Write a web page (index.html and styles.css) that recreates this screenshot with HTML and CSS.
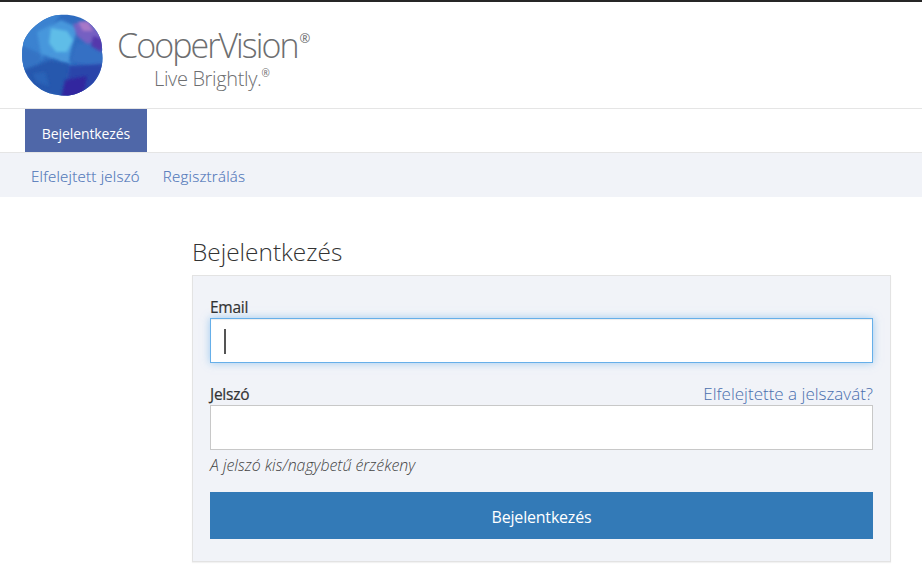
FILE: index.html
```html
<!DOCTYPE html>
<html lang="hu">
<head>
<meta charset="utf-8">
<title>Bejelentkezés</title>
<link rel="stylesheet" href="styles.css">
</head>
<body>
<header class="brand">
  <svg class="globe" width="84" height="84" viewBox="0 0 84 84" aria-hidden="true">
    <defs>
      <filter id="b" x="-30%" y="-30%" width="160%" height="160%"><feGaussianBlur stdDeviation="1.6"/></filter>
      <filter id="s" x="-5%" y="-5%" width="110%" height="110%"><feGaussianBlur stdDeviation="0.6"/></filter>
      <clipPath id="c"><path d="M38 1 C48 0 60 2 68 9 C77 16 82 27 81 38 C83 50 79 63 70 71 C60 80 48 83 37 81 C25 80 14 73 7 63 C1 53 0 42 2 31 C4 18 22 2 38 1Z"/></clipPath>
    </defs>
    <g filter="url(#s)">
      <g clip-path="url(#c)">
        <rect width="84" height="84" fill="#2f6cc0"/>
        <path d="M0 0 H40 L30 14 L24 34 L22 46 L0 44Z" fill="#3a82d0" filter="url(#b)"/>
        <path d="M-2 30 L20 40 L18 56 L-2 58Z" fill="#3673c4" filter="url(#b)"/>
        <path d="M16 18 L40 6 L58 14 L52 28 L48 46 L30 44 L20 40Z" fill="#4697dc" filter="url(#b)"/>
        <path d="M30 14 L46 17 L52 26 L46 38 L35 38 L28 29Z" fill="#5fbde8" filter="url(#b)"/>
        <path d="M30 40 L46 42 L50 50 L40 48Z" fill="#4a96da" filter="url(#b)"/>
        <path d="M56 30 L80 28 L84 50 L74 54 L50 46Z" fill="#3670c4" filter="url(#b)"/>
        <path d="M52 10 L68 6 L84 26 L66 30 L56 22Z" fill="#7460c2" filter="url(#b)"/>
        <path d="M57 8 L67 8 L72 17 L62 17Z" fill="#a878c8" filter="url(#b)"/>
        <path d="M72 22 L84 26 L80 38 L70 32Z" fill="#5438ac" filter="url(#b)"/>
        <path d="M2 56 L30 46 L48 50 L50 84 L16 78Z" fill="#2558ae" filter="url(#b)"/>
        <path d="M48 52 L84 50 L72 74 L46 84Z" fill="#2a44aa" filter="url(#b)"/>
        <path d="M44 66 L66 62 L62 84 L40 84Z" fill="#30289f" filter="url(#b)"/>
        <path d="M12 60 L24 58 L28 72 L16 68Z" fill="#2c64b8" filter="url(#b)"/>
      </g>
    </g>
  </svg>
  <div class="wordmark">
    <div class="wm-name">CooperVision<sup class="wm-r">®</sup></div>
    <div class="wm-tag">Live Brightly.<sup class="wm-r2">®</sup></div>
  </div>
</header>
<nav class="tabs">
  <a class="tab" href="#">Bejelentkezés</a>
</nav>
<nav class="subnav">
  <a href="#">Elfelejtett jelszó</a>
  <a href="#">Regisztrálás</a>
</nav>
<main class="content">
  <h1 class="title">Bejelentkezés</h1>
  <form class="panel">
    <div class="field email-field">
      <label class="label" for="email">Email</label>
      <div class="input focused" id="email"><span class="caret"></span></div>
    </div>
    <div class="field">
      <div class="label-row">
        <label class="label" for="pw">Jelszó</label>
        <a class="forgot" href="#">Elfelejtette a jelszavát?</a>
      </div>
      <input class="input" id="pw" type="password">
      <p class="hint">A jelszó kis/nagybetű érzékeny</p>
    </div>
    <button class="submit" type="button">Bejelentkezés</button>
  </form>
</main>
</body>
</html>
```
FILE: styles.css
```css
* { box-sizing: border-box; }
html, body { margin: 0; padding: 0; }
body {
  height: 587px;
  overflow: hidden;
  background: #fff;
  border-top: 2px solid #262626;
  font-family: "Open Sans", "Noto Sans", sans-serif;
  color: #333;
}
a { text-decoration: none; }
.brand {
  height: 107px;
  border-bottom: 1px solid #e5e5e5;
  display: flex;
  align-items: flex-start;
  padding: 12px 0 0 21px;
}
.globe { flex: none; }
.wordmark { margin-left: 12px; color: #6d6e70; }
.wm-name {
  font-weight: 300;
  font-size: 34px;
  line-height: 40px;
  letter-spacing: -1.95px;
  margin-top: 11px;
  white-space: nowrap;
}
.wm-r { font-size: 13px; letter-spacing: 0; vertical-align: 15px; line-height: 0; margin-left: 2px; font-weight: 400; }
.wm-tag {
  font-size: 20px;
  font-weight: 300;
  line-height: 24px;
  letter-spacing: -0.35px;
  margin: 2px 0 0 37px;
  white-space: nowrap;
}
.wm-r2 { font-size: 10px; vertical-align: 9px; line-height: 0; font-weight: 400; }
.tabs {
  height: 44px;
  padding-left: 25px;
  border-bottom: 1px solid #e5e5e5;
  display: flex;
}
.tab {
  width: 122px;
  height: 43px;
  background: #4f67a8;
  color: #fff;
  font-size: 14px;
  line-height: 50px;
  text-align: center;
  letter-spacing: -0.1px;
}
.subnav {
  height: 44px;
  background: #f1f3f8;
  padding: 1px 0 0 31px;
  display: flex;
  gap: 23px;
  align-items: center;
}
.subnav a {
  color: #4f75b8;
  font-size: 15px;
  font-weight: 300;
  letter-spacing: 0.25px;
  -webkit-text-stroke: 0.15px #4f75b8;
}
.content { padding: 0 31px 0 192px; }
.title {
  margin: 0;
  padding-top: 39px;
  height: 78px;
  font-size: 24.4px;
  font-weight: 300;
  line-height: 32px;
  color: #333;
}
.panel {
  width: 699px;
  height: 287px;
  background: #f1f3f8;
  border: 1px solid #e3e3e3;
  box-shadow: 0 1px 1px rgba(0,0,0,.05);
  padding: 21px 17px 0;
}
.field { display: block; }
.email-field { margin-bottom: 19px; }
.label {
  display: block;
  font-size: 15.5px;
  font-weight: 400;
  line-height: 21px;
  letter-spacing: -0.25px;
  color: #333;
  -webkit-text-stroke: 0.2px #333;
}
.input {
  display: block;
  width: 663px;
  height: 45px;
  background: #fff;
  border: 1px solid #c8c8c8;
  border-radius: 0;
  padding: 0;
  margin: 0;
  outline: none;
}
.focused {
  border-color: #66afe9;
  box-shadow: inset 0 1px 1px rgba(0,0,0,.075), 0 0 8px rgba(102,175,233,.6);
  padding: 10px 0 0 13px;
}
.caret { display: block; width: 2px; height: 25px; background: #555; }
.label-row { display: flex; justify-content: space-between; align-items: flex-end; height: 23px; }
.forgot {
  color: #4a6fae;
  font-size: 17px;
  line-height: 23px;
  font-weight: 300;
}
.hint {
  margin: 6px 0 0;
  font-size: 15.9px;
  line-height: 18px;
  font-style: italic;
  font-weight: 300;
  color: #444;
}
.submit {
  display: block;
  width: 663px;
  height: 47px;
  margin-top: 18px;
  padding: 2px 0 0;
  background: #337ab7;
  border: 0;
  border-radius: 0;
  color: #fff;
  font-family: inherit;
  font-size: 16px;
  letter-spacing: -0.2px;
}
```
